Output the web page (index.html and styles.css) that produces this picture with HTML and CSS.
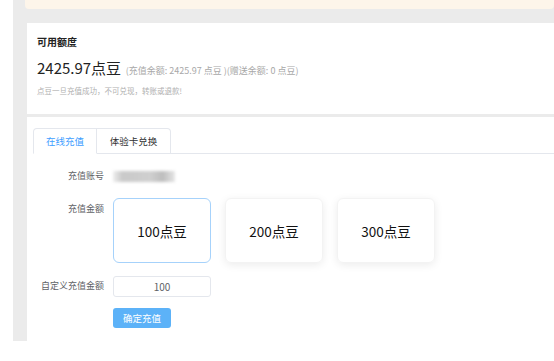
FILE: index.html
```html
<!DOCTYPE html>
<html lang="zh-CN">
<head>
    <meta charset="UTF-8">
    <meta name="viewport" content="width=device-width, initial-scale=1.0">
    <title>充值</title>
    <link rel="stylesheet" href="styles.css">
</head>
<body>
    <div class="main">
        <div class="notice">
            <span class="notice-icon">!</span>
            <span>温馨提示：点豆可用于平台内所有付费服务，充值后即时到账</span>
        </div>

        <div class="card balance">
            <div class="balance-title">可用额度</div>
            <div class="balance-amount">
                <span class="amount">2425.97点豆</span>
                <span class="amount-detail">(充值余额: 2425.97 点豆 )(赠送余额: 0 点豆)</span>
            </div>
            <div class="balance-tip">点豆一旦充值成功，不可兑现，转账或退款!</div>
        </div>

        <div class="card recharge">
            <div class="tabs">
                <div class="tab active">在线充值</div>
                <div class="tab">体验卡兑换</div>
                <div class="tab-rest"></div>
            </div>

            <div class="form">
                <div class="form-row">
                    <label class="form-label">充值账号</label>
                    <div class="account"></div>
                </div>
                <div class="form-row top">
                    <label class="form-label">充值金额</label>
                    <div class="options">
                        <div class="option selected">100点豆</div>
                        <div class="option">200点豆</div>
                        <div class="option">300点豆</div>
                    </div>
                </div>
                <div class="form-row">
                    <label class="form-label">自定义充值金额</label>
                    <input class="amount-input" type="text" value="100">
                </div>
                <div class="form-row">
                    <span class="form-label"></span>
                    <button class="submit">确定充值</button>
                </div>
            </div>
        </div>
    </div>
</body>
</html>
```

FILE: styles.css
```css
body {
    margin: 0;
    background: #fff;
    font-family: "Noto Sans CJK SC", "Liberation Sans", sans-serif;
    color: #303133;
    overflow: hidden;
}

.main {
    margin-left: 13px;
    height: 361px;
    background: #ebebeb;
    padding: 0 0 0 12px;
}

/* top notice, scrolled partly out of view */
.notice {
    margin-top: -20px;
    height: 29px;
    background: #fdf5ea;
    border-radius: 4px;
    color: #f0a43c;
    font-size: 12px;
    line-height: 14px;
    display: flex;
    align-items: flex-end;
    gap: 6px;
    padding: 0 0 9px 12px;
    box-sizing: border-box;
    overflow: hidden;
}

.notice-icon {
    width: 11px;
    height: 11px;
    border-radius: 50%;
    background: #f0a43c;
    color: #fff;
    font-size: 9px;
    text-align: center;
    line-height: 11px;
}

.card {
    background: #fff;
    margin-left: 2px;
}

/* balance */
.balance {
    margin-top: 14px;
    height: 91px;
    padding: 11px 10px 0;
    box-sizing: border-box;
}

.balance-title {
    font-size: 10px;
    font-weight: bold;
    color: #222;
    line-height: 16px;
}

.balance-amount {
    margin-top: 5px;
    line-height: 24px;
}

.amount {
    font-size: 15px;
    color: #222;
}

.amount-detail {
    font-size: 9px;
    color: #a8a8a8;
    margin-left: 1px;
}

.balance-tip {
    font-size: 7.5px;
    line-height: 10px;
    color: #b0b0b0;
    margin-top: 3px;
}

/* recharge */
.recharge {
    margin-top: 3px;
    height: 224px;
    padding: 11px 0 0 6px;
    box-sizing: border-box;
}

.tabs {
    display: flex;
    height: 26px;
}

.tab {
    font-size: 9.5px;
    line-height: 25px;
    border: 1px solid #e4e7ed;
    color: #303133;
    box-sizing: border-box;
    height: 26px;
    text-align: center;
}

.tab:first-child {
    border-radius: 4px 0 0 0;
    width: 64px;
}

.tab:nth-child(2) {
    border-left: none;
    border-radius: 0 4px 0 0;
    width: 74px;
}

.tab.active {
    color: #409eff;
    border-bottom-color: #fff;
}

.tab-rest {
    flex: 1;
    border-bottom: 1px solid #e4e7ed;
}

.form {
    padding-top: 11px;
}

.form-row {
    display: flex;
    align-items: center;
    margin-bottom: 11px;
}

.form-row.top {
    align-items: flex-start;
    margin-bottom: 12px;
}

.form-label {
    width: 71px;
    text-align: right;
    padding-right: 9px;
    font-size: 9px;
    color: #606266;
    line-height: 22px;
}

.account {
    width: 62px;
    height: 11px;
    background: linear-gradient(90deg, #eee 0%, #c9c9c9 15%, #cfcfcf 60%, #bdbdbd 80%, #e6e6e6 100%);
    filter: blur(1.5px);
}

.options {
    display: flex;
    gap: 14px;
}

.option {
    width: 98px;
    height: 65px;
    border-radius: 6px;
    box-shadow: 0 2px 8px rgba(0, 0, 0, 0.08);
    font-size: 13.5px;
    color: #111;
    display: flex;
    justify-content: center;
    align-items: center;
    box-sizing: border-box;
    border: 1px solid #f3f3f3;
}

.option.selected {
    border: 1px solid #a6d2fb;
    box-shadow: none;
}

.amount-input {
    width: 98px;
    height: 21px;
    border: 1px solid #e4e7ed;
    border-radius: 3px;
    text-align: center;
    font-size: 10px;
    font-family: inherit;
    color: #606266;
    box-sizing: border-box;
    padding: 0;
}

.submit {
    width: 58px;
    height: 20px;
    background: #5cb2f8;
    border: none;
    border-radius: 3px;
    color: #fff;
    font-size: 9.5px;
    font-family: inherit;
    padding: 0;
}
```
